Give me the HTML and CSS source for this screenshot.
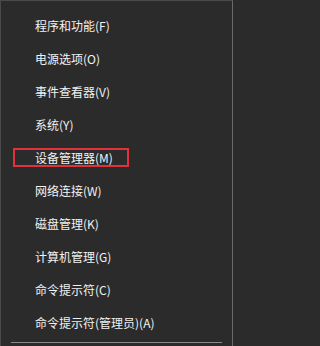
FILE: index.html
```html
<!DOCTYPE html>
<html lang="zh-CN">
<head>
<meta charset="utf-8">
<link rel="stylesheet" href="styles.css">
</head>
<body>
<div class="menu">
  <ul class="items">
    <li class="item">程序和功能(F)</li>
    <li class="item">电源选项(O)</li>
    <li class="item">事件查看器(V)</li>
    <li class="item">系统(Y)</li>
    <li class="item"><span class="hl">设备管理器(M)</span></li>
    <li class="item">网络连接(W)</li>
    <li class="item">磁盘管理(K)</li>
    <li class="item">计算机管理(G)</li>
    <li class="item">命令提示符(C)</li>
    <li class="item">命令提示符(管理员)(A)</li>
  </ul>
  <div class="sep"></div>
</div>
</body>
</html>
```
FILE: styles.css
```css
html, body {
  margin: 0;
  padding: 0;
  background: #2b2b2b;
}
.menu {
  box-sizing: border-box;
  width: 233px;
  height: 346px;
  background: #2b2b2b;
  border-top: 1px solid #4a4a4a;
  border-left: 1px solid #4a4a4a;
  border-right: 1px solid #6a6a6a;
  padding-top: 8px;
  font-family: "Noto Sans CJK SC", "Microsoft YaHei", sans-serif;
  font-size: 12px;
  color: #f2f2f2;
  overflow: hidden;
}
.items {
  list-style: none;
  margin: 0;
  padding: 0;
}
.item {
  height: 33px;
  line-height: 33px;
  padding-left: 34px;
  white-space: nowrap;
}
.hl {
  display: inline-block;
  line-height: 15px;
  margin-left: -22px;
  padding: 0 14px 0 20px;
  border: 2px solid #e0313d;
}
.sep {
  margin: 3px 10px 0 10px;
  height: 1px;
  background: #8a8a8a;
}
```
